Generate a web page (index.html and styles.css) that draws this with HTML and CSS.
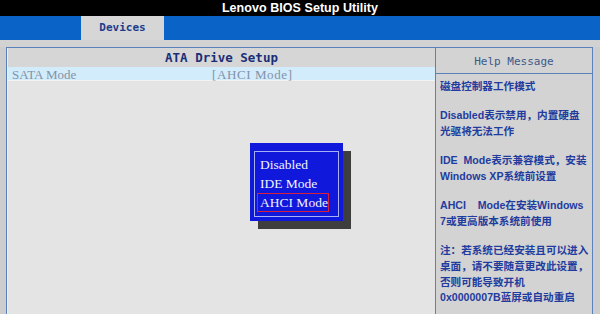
FILE: index.html
```html
<!DOCTYPE html>
<html>
<head>
<meta charset="utf-8">
<link rel="stylesheet" href="styles.css">
</head>
<body>
<div class="screen">
  <div class="titlebar">Lenovo BIOS Setup Utility</div>
  <div class="menubar"><div class="tab">Devices</div></div>
  <div class="strip"></div>
  <div class="frame">
    <div class="main">
      <div class="main-head">ATA Drive Setup</div>
      <div class="row selected"><span class="label">SATA Mode</span><span class="value">[AHCI Mode]</span></div>
      <div class="main-body"></div>
    </div>
    <div class="help">
      <div class="help-head">Help Message</div>
      <div class="help-body">
        <p>磁盘控制器工作模式</p>
        <p>Disabled表示禁用，内置硬盘<br>光驱将无法工作</p>
        <p>IDE&nbsp; Mode表示兼容模式，安装<br>Windows XP系统前设置</p>
        <p>AHCI&nbsp;&nbsp;&nbsp; Mode在安装Windows<br>7或更高版本系统前使用</p>
        <p>注：若系统已经安装且可以进入<br>桌面，请不要随意更改此设置，<br>否则可能导致开机<br>0x0000007B蓝屏或自动重启</p>
      </div>
    </div>
  </div>
  <div class="popup">
    <div class="popup-inner">
      <div class="item">Disabled</div>
      <div class="item">IDE Mode</div>
      <div class="item current">AHCI Mode</div>
    </div>
  </div>
</div>
</body>
</html>
```

FILE: styles.css
```css
html, body {
  margin: 0;
  padding: 0;
}
body {
  width: 600px;
  height: 314px;
  overflow: hidden;
  background: #cdcdcd;
}
.screen {
  position: relative;
  width: 600px;
  height: 314px;
  display: flex;
  flex-direction: column;
}
.titlebar {
  flex-shrink: 0;
  height: 16px;
  background: #000;
  color: #fff;
  font-family: "Liberation Sans", Arial, sans-serif;
  font-weight: bold;
  font-size: 12.5px;
  line-height: 16px;
  text-align: center;
  letter-spacing: 0.05px;
}
.menubar {
  flex-shrink: 0;
  height: 24px;
  background: #0a64c8;
  display: flex;
  padding-left: 81px;
}
.tab {
  width: 83px;
  background: #d6d6d6;
  color: #1c3c8c;
  font-family: "DejaVu Sans Mono", monospace;
  font-weight: bold;
  font-size: 11px;
  line-height: 24px;
  text-align: center;
}
.strip {
  flex-shrink: 0;
  height: 7px;
  background: #d2d2d2;
}
.frame {
  flex: 1;
  min-height: 0;
  overflow: hidden;
  margin: 0 7px 0 6px;
  border: 1px solid #5a82ba;
  border-bottom: none;
  display: flex;
}
.main {
  width: 427px;
  display: flex;
  flex-direction: column;
  background: #e4e4e4;
  border-left: 1px solid #eeeeee;
}
.main-head {
  flex-shrink: 0;
  height: 19px;
  background: #d6d6d6;
  color: #1a2e78;
  font-family: "DejaVu Sans Mono", monospace;
  font-weight: bold;
  font-size: 12.5px;
  line-height: 19px;
  text-align: center;
}
.row {
  flex-shrink: 0;
  height: 13px;
  display: flex;
  font-family: "Liberation Serif", "Times New Roman", serif;
  font-size: 13px;
  line-height: 13px;
  color: #8292aa;
}
.row.selected {
  background: #d2ecfb;
  border-bottom: 1px solid #f2f2f2;
}
.label {
  width: 204px;
  padding-left: 4px;
  box-sizing: border-box;
  padding-top: 1px;
}
.value {
  padding-top: 1px;
  letter-spacing: 0.6px;
}
.main-body {
  flex: 1;
}
.help {
  flex: 1;
  border-left: 1px solid #5a82ba;
  background: #d3d3d3;
  display: flex;
  flex-direction: column;
}
.help-head {
  flex-shrink: 0;
  height: 25px;
  border-bottom: 1px solid #5a82ba;
  color: #3c5a8a;
  font-family: "DejaVu Sans Mono", monospace;
  font-size: 11px;
  line-height: 27px;
  text-align: center;
}
.help-body {
  padding: 5px 0 0 4px;
  color: #1f3c9e;
  font-family: "Liberation Sans", "Noto Sans CJK SC", sans-serif;
  font-weight: bold;
  font-size: 10.6px;
  line-height: 15.7px;
  white-space: nowrap;
}
.help-body p {
  margin: 0 0 13.6px 0;
}
.popup {
  position: absolute;
  left: 250px;
  top: 143px;
  width: 93px;
  box-sizing: border-box;
  padding: 8px 4px 4px 4px;
  background: #1018dc;
  box-shadow: 8px 8px 0 #3e3e3e;
}
.popup-inner {
  border: 1px solid #a8b0f4;
  padding: 3px 0 4px 2px;
}
.item {
  width: 72px;
  height: 19px;
  box-sizing: border-box;
  border: 1px solid transparent;
  padding-left: 2px;
  color: #f2f2ff;
  font-family: "Liberation Serif", "Times New Roman", serif;
  font-size: 13.5px;
  line-height: 17px;
  white-space: nowrap;
}
.item.current {
  border-color: #d8203c;
}
```
